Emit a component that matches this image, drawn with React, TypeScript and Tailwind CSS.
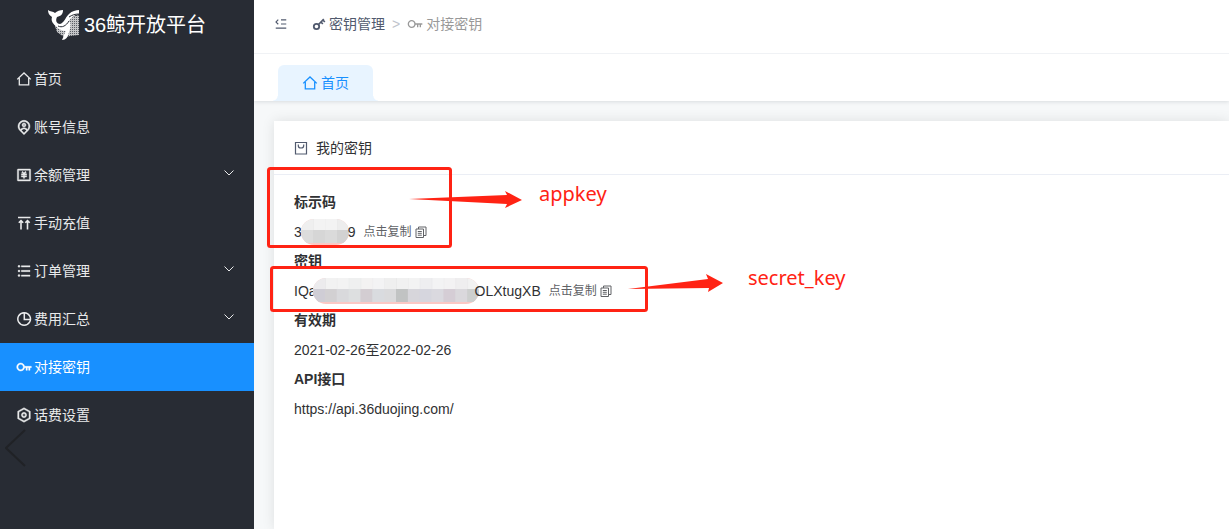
import type { ReactNode } from 'react'
import {
  RiKeyLine,
  RiListUnordered,
  RiMapPinUserLine,
  RiMenuFoldLine,
  RiMoneyCnyBoxLine,
  RiSettingsLine,
} from 'react-icons/ri'

type IconProps = { className?: string }

function HomeIcon({ className }: IconProps) {
  return (
    <svg viewBox="0 0 16 16" className={className} fill="none">
      <path d="M1.2 8.4 8 2l6.8 6.4M3.3 7v6.9h9.4V7" stroke="currentColor" strokeWidth="1.3" />
    </svg>
  )
}

function DoubleUpIcon({ className }: IconProps) {
  return (
    <svg viewBox="0 0 16 16" className={className} fill="none">
      <path
        d="M2 2.5h12.500M5 14.500V6M11.500 14.500V6M2.800 7.800 5 5.600l2.200 2.200M9.300 7.800l2.200-2.200 2.200 2.200"
        stroke="currentColor"
        strokeWidth="1.6"
      />
    </svg>
  )
}

function PieIcon({ className }: IconProps) {
  return (
    <svg viewBox="0 0 16 16" className={className} fill="none">
      <path
        d="M8.300 1.700V8.400h6M8.300 1.700A6.300 6.300 0 1 1 8 1.700z"
        stroke="currentColor"
        strokeWidth="1.5"
      />
    </svg>
  )
}

function KeyIcon({ className }: IconProps) {
  return (
    <svg viewBox="0 0 14 14" className={className} fill="none" stroke="currentColor">
      <circle cx="4.5" cy="9.5" r="2.7" strokeWidth="1.8" />
      <path d="m6.500 7.500 5.300-5.300M9 5l1.800 2M11 3l1.800 2" strokeWidth="1.700" />
    </svg>
  )
}

function BagIcon({ className }: IconProps) {
  return (
    <svg viewBox="0 0 14 14" className={className} fill="none">
      <path
        d="M1.5 1.5h11V13h-11zM4.300 3.500v1.200c0 1.400 1 2.300 2.700 2.300s2.700-.9 2.700-2.300V3.500"
        stroke="currentColor"
        strokeWidth="1.2"
      />
    </svg>
  )
}

function CopyIcon({ className }: IconProps) {
  return (
    <svg viewBox="0 0 12 12" className={className} fill="none">
      <path
        d="M3.500 3V1H11v8.500H9M1 3h7.500v8.500H1zM2.800 5.500h4M2.800 7.300h4M2.800 9.200h4"
        stroke="currentColor"
      />
    </svg>
  )
}

function WhaleLogo() {
  return (
    <svg viewBox="0 0 32 32" className="h-8 w-8 shrink-0">
      <defs>
        <pattern id="belly" width="2" height="2" patternUnits="userSpaceOnUse">
          <rect width="2" height="2" fill="#c4c5c7" />
          <rect width="1" height="1" fill="#5b5f66" />
        </pattern>
      </defs>
      <path d="M24 8 31 6v20l-9 1-6 1-7-5-3-9 6 3 7-3z" fill="url(#belly)" />
      <path
        d="M0 1c2 2 5 1 7 3 2-2 5-3 8-3 0 4-2 6-6 7-2 4 0 7 3 7 4-1 5-6 9-10 3-3 7-4 10-4v4c-5 1-8 4-10 7 2 1 2 6 0 11-1 5-3 8-7 8 2-4 2-6 4-9-4 0-8-2-10-5-4-3-5-6-4-9C1 6 0 4 0 1z"
        fill="#fff"
      />
      <path d="M21 8c3-2 6-3 10-3M10 17c4 2 8 0 11-5" fill="none" stroke="#282c34" />
    </svg>
  )
}

const menu = [
  { label: '首页', Icon: HomeIcon },
  { label: '账号信息', Icon: RiMapPinUserLine },
  { label: '余额管理', Icon: RiMoneyCnyBoxLine, children: true },
  { label: '手动充值', Icon: DoubleUpIcon },
  { label: '订单管理', Icon: RiListUnordered, children: true },
  { label: '费用汇总', Icon: PieIcon, children: true },
  { label: '对接密钥', Icon: RiKeyLine, active: true },
  { label: '话费设置', Icon: RiSettingsLine },
]

function Sidebar() {
  return (
    <aside className="relative w-[254px] shrink-0 bg-[#282c34] text-[#e9eaeb]">
      <div className="flex h-[50px] items-center justify-center gap-1 text-xl text-white">
        <WhaleLogo />
        <span>36鲸开放平台</span>
      </div>
      <nav className="mt-[5px]">
        {menu.map(({ label, Icon, children, active }) => (
          <a
            key={label}
            href="#"
            className={`flex h-12 items-center gap-[2px] pr-5 pl-4 ${active ? 'bg-[#1890ff] text-white' : ''}`}
          >
            <Icon className="h-4 w-4 shrink-0 stroke-current stroke-[0.6]" />
            <span>{label}</span>
            {children && (
              <svg viewBox="0 0 10 6" className="mb-1 ml-auto h-[6px] w-[10px]" fill="none" stroke="currentColor">
                <path d="M.5.5 5 5 9.5.5" />
              </svg>
            )}
          </a>
        ))}
      </nav>
      <button type="button" aria-label="上一张" className="absolute top-[429px] left-[5px] text-[#202226]">
        <svg viewBox="0 0 21 38" className="h-[38px] w-[21px]" fill="none" stroke="currentColor" strokeWidth="2">
          <path d="M20 1 1 19l19 18" />
        </svg>
      </button>
    </aside>
  )
}

const shortCells = ['#dcdcdc', '#d6d6d6', '#dadada', '#d2d2d2']
const longCells = [
  '#cfcdd5', '#d2d0d2', '#d9d9dc', '#dddfe0', '#d3cdd2', '#d9dbdf', '#dadadc',
  '#c1c3c3', '#d7d6db', '#d6d6de', '#dad9df', '#d5cdd5', '#dad8dc', '#cdcfce',
]

// Mosaic smear that hides the middle of a value
function Mask({ id, width, cells, className }: { id: string; width: number; cells: string[]; className: string }) {
  const step = width / cells.length
  return (
    <svg width={width} height="26" className={`shrink-0 ${className}`}>
      <clipPath id={id}>
        <rect width={width} height="26" rx="13" />
      </clipPath>
      <g clipPath={`url(#${id})`}>
        <rect width={width} height="26" fill="#fbc8c5" />
        <rect width={width} height="12" fill="#f6f6f6" />
        {cells.map((fill, i) => (
          <g key={i} fill={fill}>
            <rect x={i * step} y="11" width={step + 1} height="13" />
            <rect x={i * step} width={step + 1} height="11" opacity={i % 3 ? 0.1 : 0.25} />
          </g>
        ))}
      </g>
    </svg>
  )
}

function CopyButton() {
  return (
    <button type="button" className="ml-2 flex items-center gap-[3px] text-xs text-[#606266]">
      点击复制
      <CopyIcon className="h-3 w-3" />
    </button>
  )
}

function Field({ label, children }: { label: string; children: ReactNode }) {
  return (
    <div>
      <dt className="h-[29px] leading-[29px] font-bold">{label}</dt>
      <dd className="flex h-[30px] items-center">{children}</dd>
    </div>
  )
}

// Red boxes and arrows drawn over the card
function Annotations() {
  return (
    <div className="pointer-events-none absolute -top-2 -left-2 font-['Noto_Sans',sans-serif] text-xl text-[#ff2314]">
      <svg width="470" height="150" fill="none" stroke="currentColor" strokeWidth="3">
        <rect x="2.5" y="1.5" width="182" height="78" rx="2" />
        <rect x="5.5" y="100.5" width="375" height="43" rx="2" />
        <g fill="currentColor" stroke="none">
          <path d="M143 32 241 28l-2-4 17 9-17 8 2-4z" />
          <path d="M362 122 442 112l-2-5 17 9-15 9 1-4z" />
        </g>
      </svg>
      <span className="absolute top-[13px] left-[273px] leading-7">appkey</span>
      <span className="absolute top-[97px] left-[482px] leading-7">secret_key</span>
    </div>
  )
}

export default function App() {
  return (
    <div className="flex min-h-screen bg-[#f6f8f9] font-['Liberation_Sans','Noto_Sans_CJK_SC',sans-serif] text-sm text-[#303133]">
      <Sidebar />
      <div className="flex min-w-0 flex-1 flex-col">
        <header className="bg-white shadow-[0_1px_4px_rgba(0,21,41,0.12)]">
          <div className="flex h-[54px] items-center border-b border-[#f0f2f5] pb-[6px] pl-5 text-[#515a6e]">
            <button type="button" aria-label="收起菜单">
              <RiMenuFoldLine className="h-[14px] w-[14px]" />
            </button>
            <nav className="ml-6 flex items-center gap-[3px]">
              <KeyIcon className="h-[14px] w-[14px]" />
              <a href="#">密钥管理</a>
              <span className="mx-1 text-[#c0c4cc]">&gt;</span>
              <RiKeyLine className="h-4 w-4 text-[#999]" />
              <span className="text-[#999]">对接密钥</span>
            </nav>
          </div>
          <div className="flex h-[47px] items-end pl-6">
            <a
              href="#"
              className="relative flex h-9 w-[95px] items-center justify-center gap-[3px] rounded-t-md bg-[#e8f4ff] text-[#1890ff] before:absolute before:bottom-0 before:-left-[5px] before:h-[5px] before:w-[5px] before:bg-[radial-gradient(circle_at_0_0,transparent_4px,#e8f4ff_5px)] after:absolute after:-right-[5px] after:bottom-0 after:h-[5px] after:w-[5px] after:bg-[radial-gradient(circle_at_100%_0,transparent_4px,#e8f4ff_5px)]"
            >
              <HomeIcon className="h-4 w-4" />
              首页
            </a>
          </div>
        </header>
        <main className="flex flex-1 flex-col pt-5 pl-5">
          <section className="flex-1 bg-white shadow-[0_0_12px_rgba(0,0,0,0.1)]">
            <h2 className="flex h-[54px] items-center gap-2 border-b border-[#ebeef5] pl-5">
              <BagIcon className="h-[14px] w-[14px] text-[#515a6e]" />
              我的密钥
            </h2>
            <div className="relative px-5 pt-[13px] pb-5">
              <dl>
                <Field label="标示码">
                  3<Mask id="mask-appkey" width={48} cells={shortCells} className="-mx-px" />9
                  <CopyButton />
                </Field>
                <Field label="密钥">
                  IQa
                  <Mask id="mask-secret" width={166} cells={longCells} className="-mx-1" />
                  OLXtugXB
                  <CopyButton />
                </Field>
                <Field label="有效期">2021-02-26至2022-02-26</Field>
                <Field label="API接口">https://api.36duojing.com/</Field>
              </dl>
              <Annotations />
            </div>
          </section>
        </main>
      </div>
    </div>
  )
}
